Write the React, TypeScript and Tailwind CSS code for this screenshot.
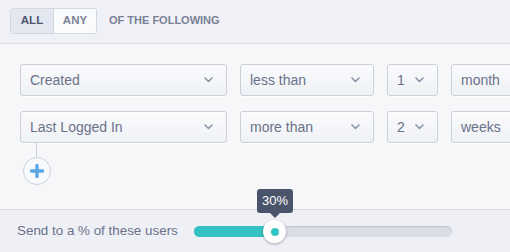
import React from "react";

function Chevron() {
  return (
    <svg width="9" height="6" viewBox="0 0 9 6" className="shrink-0">
      <path d="M1 1l3.5 3.5L8 1" fill="none" stroke="#8b95a7" strokeWidth="1.6" strokeLinecap="round" strokeLinejoin="round" />
    </svg>
  );
}

function Select({ label, w, chevron = true, pr = "pr-[13px]" }: { label: string; w: string; chevron?: boolean; pr?: string }) {
  return (
    <div
      className={`${w} h-[32px] shrink-0 flex items-center justify-between pl-[9px] ${pr} rounded-[3px] border border-[#c8d1dc] bg-gradient-to-b from-[#fbfbfd] to-[#eef1f5] shadow-[0_1px_0_rgba(255,255,255,0.8)] text-[14px] text-[#6a7289]`}
    >
      <span>{label}</span>
      {chevron && <Chevron />}
    </div>
  );
}

export default function App() {
  return (
    <div className="w-[510px] h-[252px] overflow-hidden bg-[#f7f7f9] flex flex-col" style={{ fontFamily: '"Liberation Sans", Arial, sans-serif' }}>
      <div className="h-[44px] shrink-0 bg-[#f0f1f6] border-b border-[#dcdee6] flex items-center pl-[10px]">
        <div className="flex h-[26px] rounded-[3px] border border-[#d3d7e0] overflow-hidden mt-[-2px]">
          <div className="w-[43px] flex items-center justify-center bg-[#e3e7ef] text-[11.5px] font-bold text-[#4f566c] border-r border-[#d3d7e0]">ALL</div>
          <div className="w-[42px] flex items-center justify-center bg-[#fafbfc] text-[11.5px] font-bold text-[#7a8196]">ANY</div>
        </div>
        <div className="ml-[12px] text-[11px] font-bold text-[#7a8196] mt-[-2px]">OF THE FOLLOWING</div>
      </div>
      <div className="flex-1 pt-[20px] pl-[20px] flex flex-col">
        <div className="flex gap-[13px]">
          <Select label="Created" w="w-[207px]" />
          <Select label="less than" w="w-[134px]" />
          <Select label="1" w="w-[51px]" />
          <Select label="month" w="w-[80px]" chevron={false} />
        </div>
        <div className="flex gap-[13px] mt-[15px]">
          <Select label="Last Logged In" w="w-[207px]" />
          <Select label="more than" w="w-[134px]" />
          <Select label="2" w="w-[51px]" />
          <Select label="weeks" w="w-[80px]" chevron={false} />
        </div>
        <div className="ml-[16px] w-px h-[14px] bg-[#c8d1dc]" />
        <div className="ml-[3px] w-[28px] h-[28px] rounded-full border border-[#c8d3de] bg-[#f8f9fb] flex items-center justify-center">
          <svg width="14" height="14" viewBox="0 0 14 14">
            <path d="M7 1.5v11M1.5 7h11" stroke="#5ba7e6" strokeWidth="3.4" strokeLinecap="round" />
          </svg>
        </div>
      </div>
      <div className="h-[43px] shrink-0 bg-[#eff0f5] border-t border-[#d8dbe3] flex items-center pl-[17px]">
        <span className="w-[177px] shrink-0 whitespace-nowrap text-[13.4px] text-[#6a7289] mt-[1px]">Send to a % of these users</span>
        <div className="relative w-[258px] h-[11px] mt-[1px] rounded-full bg-[#d9dee6] shadow-[inset_0_1px_1px_rgba(0,0,0,0.12)]">
          <div className="absolute left-0 top-0 h-full w-[80px] rounded-full bg-[#35c2c3]" />
          <div className="absolute left-[69px] top-[-6px] w-[23px] h-[23px] rounded-full bg-white shadow-[0_1px_3px_rgba(0,0,0,0.3)] flex items-center justify-center">
            <div className="w-[8px] h-[8px] rounded-full bg-[#35c2c3]" />
          </div>
          <div className="absolute left-[63px] top-[-37px] flex flex-col items-center">
            <div className="w-[36px] h-[24px] rounded-[3px] bg-[#4a556b] text-white text-[13px] flex items-center justify-center">30%</div>
            <div className="w-0 h-0 border-l-[5px] border-r-[5px] border-t-[5px] border-l-transparent border-r-transparent border-t-[#4a556b]" />
          </div>
        </div>
      </div>
    </div>
  );
}
